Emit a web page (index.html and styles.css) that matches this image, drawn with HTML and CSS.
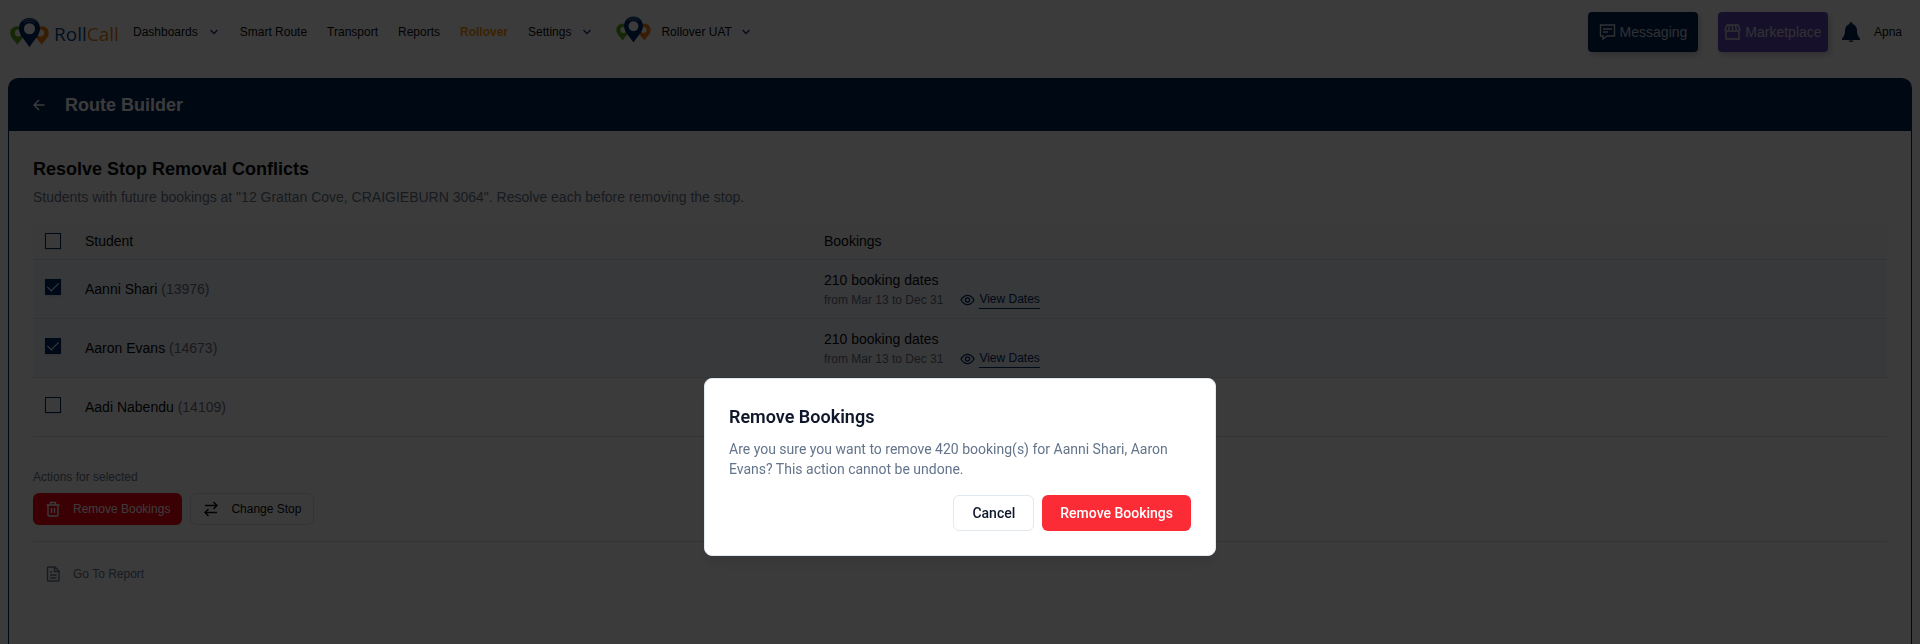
FILE: index.html
```html
<!DOCTYPE html>
<html lang="en">
<head>
    <meta charset="UTF-8">
    <meta name="viewport" content="width=device-width, initial-scale=1.0">
    <title>RollCall - Route Builder</title>
    <link rel="stylesheet" href="styles.css">
</head>
<body>

<svg class="sprite" aria-hidden="true">
    <symbol id="pins" viewBox="0 0 40 31">
        <path fill="#5fa81c" fill-rule="evenodd" d="M7.500 9C3 9 .3 12 .3 16c0 5 4 7 7.200 12 3.200-5 7.200-7 7.200-12 0-4-2.700-7-7.200-7zm1 3.500a3.500 3.500 0 1 1 0 7 3.500 3.500 0 0 1 0-7z"/>
        <path fill="#f07c14" fill-rule="evenodd" d="M32.500 9c-4.500 0-7.200 3-7.200 7 0 5 4 7 7.200 12 3.200-5 7.200-7 7.200-12 0-4-2.700-7-7.200-7zm-1 3.500a3.500 3.500 0 1 1 0 7 3.500 3.500 0 0 1 0-7z"/>
        <path fill="#002a68" fill-rule="evenodd" d="M20 .5C13.500.5 9.200 5 9.200 11.500c0 7 6 11.500 10.800 19 4.800-7.500 10.800-12 10.800-19C30.800 5 26.500.5 20 .5zm0 5.500a5.700 5.700 0 1 1 0 11.400A5.700 5.700 0 0 1 20 6z"/>
        <path fill="none" stroke="#c3d0e6" stroke-width=".5" d="M13 4.500c4-3.300 10-3.300 14 0M14.500 6c3.500-2.700 7.500-2.700 11 0"/>
    </symbol>
    <symbol id="chevron" viewBox="0 0 8 6">
        <path fill="none" stroke="#0a3478" stroke-width="1.300" d="M.5 1 4 4.500 7.500 1"/>
    </symbol>
    <symbol id="eye" viewBox="0 0 16 12">
        <path d="M1 6c2-3.300 4.300-5 7-5s5 1.700 7 5c-2 3.300-4.300 5-7 5S3 9.300 1 6z"/>
        <circle cx="8" cy="6" r="2.200"/>
    </symbol>
</svg>

<header class="navbar">
    <a class="logo" href="#">
        <svg class="logo-pins"><use href="#pins"/></svg>
        <span class="logo-text">Roll<span>Call</span></span>
    </a>
    <nav class="menu">
        <a class="has-menu" href="#">Dashboards <svg class="chevron"><use href="#chevron"/></svg></a>
        <a href="#">Smart Route</a>
        <a href="#">Transport</a>
        <a href="#">Reports</a>
        <a class="active" href="#">Rollover</a>
        <a class="has-menu" href="#">Settings <svg class="chevron"><use href="#chevron"/></svg></a>
        <a class="has-menu org" href="#"><svg class="org-pins"><use href="#pins"/></svg> Rollover UAT <svg class="chevron"><use href="#chevron"/></svg></a>
    </nav>
    <div class="user-area">
        <button class="nav-btn messaging" type="button">
            <svg viewBox="0 0 17 16"><path d="M1.500 1h14v11H8l-4 3v-3H1.500zM4 5h9M4 8h5"/></svg>
            Messaging
        </button>
        <button class="nav-btn marketplace" type="button">
            <svg viewBox="0 0 17 16"><path d="M3 1h11l2 5a2 2 0 0 1-3.700 0 2 2 0 0 1-3.800 0 2 2 0 0 1-3.800 0A2 2 0 0 1 1 6zM2 8v7h13V8M5.500 1l-.8 5M8.500 1v5M11.500 1l.8 5"/></svg>
            Marketplace
        </button>
        <svg class="bell" viewBox="0 0 18 20"><path d="M9 0a1.500 1.500 0 0 0-1.500 1.500v.6C4.500 3 3 5.500 3 8.500c0 4-1 6-3 8V18h18v-1.500c-2-2-3-4-3-8 0-3-1.500-5.500-4.500-6.400v-.6A1.500 1.500 0 0 0 9 0zM6.800 18.500a2.200 1.500 0 0 0 4.400 0z"/></svg>
        <a class="user" href="#">Apna</a>
    </div>
</header>

<main class="panel">
    <div class="panel-header">
        <a class="back" href="#" aria-label="Back"><svg viewBox="0 0 12 12"><path d="M11.500 6H1M6 1 1 6l5 5"/></svg></a>
        <h1>Route Builder</h1>
    </div>
    <div class="panel-body">
        <h2>Resolve Stop Removal Conflicts</h2>
        <p class="subtitle">Students with future bookings at "12 Grattan Cove, CRAIGIEBURN 3064". Resolve each before removing the stop.</p>

        <table class="conflicts">
            <thead>
                <tr>
                    <th class="check"><input type="checkbox" aria-label="Select all students"></th>
                    <th class="student">Student</th>
                    <th>Bookings</th>
                </tr>
            </thead>
            <tbody>
                <tr class="selected">
                    <td class="check"><input type="checkbox" id="s13976" checked></td>
                    <td><label for="s13976">Aanni Shari <span class="muted">(13976)</span></label></td>
                    <td class="dates">
                        <div>210 booking dates</div>
                        <div class="range">from Mar 13 to Dec 31 <a href="#"><svg><use href="#eye"/></svg><span>View Dates</span></a></div>
                    </td>
                </tr>
                <tr class="selected">
                    <td class="check"><input type="checkbox" id="s14673" checked></td>
                    <td><label for="s14673">Aaron Evans <span class="muted">(14673)</span></label></td>
                    <td class="dates">
                        <div>210 booking dates</div>
                        <div class="range">from Mar 13 to Dec 31 <a href="#"><svg><use href="#eye"/></svg><span>View Dates</span></a></div>
                    </td>
                </tr>
                <tr>
                    <td class="check"><input type="checkbox" id="s14109"></td>
                    <td><label for="s14109">Aadi Nabendu <span class="muted">(14109)</span></label></td>
                    <td></td>
                </tr>
            </tbody>
        </table>

        <div class="actions">
            <p>Actions for selected</p>
            <div class="action-row">
                <button class="action danger" type="button">
                    <svg viewBox="0 0 16 16"><path d="M1.500 4h13M5.500 4V1.500h5V4M3 4v10q0 1 1 1h8q1 0 1-1V4M6.500 7v5M9.500 7v5"/></svg>
                    Remove Bookings
                </button>
                <button class="action outline" type="button">
                    <svg viewBox="0 0 16 16"><path d="M2 4.500h12M10.500 1 14 4.500 10.500 8M14 11.500H2M5.500 8 2 11.500 5.500 15"/></svg>
                    Change Stop
                </button>
            </div>
        </div>

        <button class="action report" type="button">
            <svg viewBox="0 0 16 16"><path d="M3.500 1H10l4 4v9q0 1-1 1H3.500q-1 0-1-1V2q0-1 1-1zM9.500 1v4.500H14M5 6h2M5 9h6.500M5 12h6.500"/></svg>
            Go To Report
        </button>
    </div>
</main>

<div class="overlay">
    <div class="dialog" role="alertdialog" aria-modal="true" aria-labelledby="dialogTitle" aria-describedby="dialogText">
        <h2 id="dialogTitle">Remove Bookings</h2>
        <p id="dialogText">Are you sure you want to remove 420 booking(s) for Aanni Shari, Aaron Evans? This action cannot be undone.</p>
        <div class="dialog-buttons">
            <button class="cancel" type="button">Cancel</button>
            <button class="confirm" type="button">Remove Bookings</button>
        </div>
    </div>
</div>

</body>
</html>
```
FILE: styles.css
```css
* {
    box-sizing: border-box;
}

body {
    margin: 0;
    height: 100vh;
    display: flex;
    flex-direction: column;
    overflow: hidden;
    background: #ffffff;
    color: #09090b;
    font-family: "Liberation Sans", Arial, sans-serif;
    font-size: 14px;
    line-height: 20px;
}

h1, h2, p {
    margin: 0;
}

a {
    color: inherit;
    text-decoration: none;
}

button {
    font: inherit;
    cursor: pointer;
}

svg {
    flex-shrink: 0;
}

.sprite {
    display: none;
}

/* top navigation */
.navbar {
    display: flex;
    align-items: center;
    height: 64px;
    padding: 0 18px 0 10px;
    font-size: 12px;
}

.logo {
    display: flex;
    align-items: center;
    gap: 5px;
    width: 123px;
}

.logo-pins {
    width: 39px;
    height: 31px;
}

.logo-text {
    padding-top: 3px;
    color: #0a4488;
    font-family: "Open Sans", sans-serif;
    font-size: 19px;
    line-height: 28px;
}

.logo-text span {
    color: #f07c14;
}

.menu {
    display: flex;
    align-items: center;
    gap: 20px;
}

.menu a {
    display: flex;
    align-items: center;
    gap: 12px;
    white-space: nowrap;
}

.menu .has-menu {
    padding-right: 2px;
}

.menu .org {
    margin-left: 3px;
    gap: 10px;
}

.menu .active {
    color: #ff9800;
    font-weight: bold;
}

.chevron {
    width: 8px;
    height: 6px;
}

.org-pins {
    width: 35px;
    height: 27px;
    margin-top: -6px;
}

.user-area {
    display: flex;
    align-items: center;
    margin-left: auto;
}

.nav-btn {
    display: flex;
    align-items: center;
    justify-content: center;
    gap: 4px;
    width: 110px;
    height: 40px;
    margin-right: 20px;
    padding: 0;
    border: none;
    border-radius: 4px;
    color: #d0d3dc;
    font-size: 14px;
    box-shadow: 2px 3px 6px rgba(0, 0, 0, 0.2);
}

.nav-btn svg {
    width: 17px;
    height: 16px;
    fill: none;
    stroke: currentColor;
    stroke-width: 1.4;
}

.messaging {
    background: #002358;
}

.marketplace {
    margin-right: 14px;
    background: #6547b5;
}

.bell {
    width: 18px;
    height: 20px;
    margin-right: 14px;
    fill: #002358;
}

/* route builder panel */
.panel {
    flex: 1;
    margin: 14px 8px 0;
    border: 1px solid #002358;
    border-bottom: none;
    border-radius: 10px 10px 0 0;
}

.panel-header {
    display: flex;
    align-items: center;
    gap: 20px;
    height: 52px;
    padding: 0 24px;
    background: #002358;
    color: #ffffff;
    border-radius: 8px 8px 0 0;
}

.panel-header h1,
.panel-body h2 {
    font-size: 18px;
    line-height: 28px;
}

.back {
    display: flex;
}

.back svg {
    width: 12px;
    height: 12px;
    fill: none;
    stroke: currentColor;
    stroke-width: 1.4;
}

.panel-body {
    padding: 24px;
}

.subtitle {
    margin-top: 4px;
    color: #64748b;
}

/* conflicts table */
.conflicts {
    width: 100%;
    margin-top: 16px;
    border-collapse: collapse;
    table-layout: fixed;
}

.conflicts th {
    height: 36px;
    padding: 0;
    font-weight: normal;
    text-align: left;
}

.conflicts td {
    height: 59px;
    padding: 0;
}

.conflicts tr {
    border-bottom: 1px solid #dce1ea;
}

.conflicts thead tr {
    background: #f5fbf7;
}

.conflicts .selected {
    background: #f1f4fb;
}

.conflicts .check {
    width: 52px;
    padding-left: 12px;
}

.conflicts td.check {
    padding-bottom: 4px;
}

.conflicts td.dates {
    padding-top: 2px;
}

.conflicts .student {
    width: 739px;
}

.conflicts input {
    display: block;
    width: 16px;
    height: 16px;
    margin: 0;
    appearance: none;
    border: 1px solid #002a68;
    box-shadow: 0 1px 2px rgba(0, 0, 0, 0.1);
}

.conflicts input:checked {
    background: #002a68;
}

.conflicts input:checked::before {
    content: "";
    display: block;
    width: 5px;
    height: 10px;
    margin: 0 auto;
    border: solid #ffffff;
    border-width: 0 1px 1px 0;
    transform: rotate(45deg);
}

.muted,
.range {
    color: #6b7080;
}

.range {
    display: flex;
    align-items: center;
    gap: 17px;
    font-size: 12px;
}

.range a {
    display: flex;
    align-items: center;
    gap: 4px;
    color: #002a68;
}

.range a span {
    border-bottom: 1px solid #002a68;
    line-height: 17px;
}

.range svg {
    width: 15px;
    height: 12px;
    fill: none;
    stroke: currentColor;
    stroke-width: 1.4;
}

/* actions below the table */
.actions {
    padding: 30px 0 16px;
    border-bottom: 1px solid #dce1ea;
    color: #64748b;
    font-size: 12px;
}

.action-row {
    display: flex;
    gap: 8px;
    margin-top: 6px;
}

.action {
    display: flex;
    align-items: center;
    gap: 12px;
    height: 32px;
    padding: 0 12px;
    border: none;
    border-radius: 6px;
    background: none;
    font-size: 12px;
}

.action svg {
    width: 16px;
    height: 16px;
    fill: none;
    stroke: currentColor;
    stroke-width: 1.4;
}

.danger {
    background: #fb0010;
    color: #ffffff;
}

.outline {
    border: 1px solid #dce1ea;
    color: #09090b;
}

.report {
    margin-top: 16px;
    color: #64748b;
}

/* confirmation dialog */
.overlay {
    position: fixed;
    inset: 0;
    display: flex;
    align-items: flex-start;
    justify-content: center;
    padding-top: 378px;
    background: rgba(0, 0, 0, 0.77);
}

.dialog {
    width: 512px;
    padding: 24px;
    border: 1px solid #e2e8f0;
    border-radius: 8px;
    background: #ffffff;
    color: #0f172a;
    font-family: Roboto, sans-serif;
    box-shadow: 0 10px 15px -3px rgba(0, 0, 0, 0.1);
}

.dialog h2 {
    font-size: 18px;
    font-weight: 600;
    line-height: 28px;
}

.dialog p {
    margin-top: 8px;
    color: #64748b;
}

.dialog-buttons {
    display: flex;
    justify-content: flex-end;
    gap: 8px;
    margin-top: 16px;
}

.dialog-buttons button {
    height: 36px;
    padding: 0 18px;
    border: none;
    border-radius: 6px;
    font-weight: 500;
}

.dialog-buttons .cancel {
    border: 1px solid #e2e8f0;
    background: #ffffff;
    color: #0f172a;
}

.dialog-buttons .confirm {
    background: #fb2c36;
    color: #ffffff;
}
```
